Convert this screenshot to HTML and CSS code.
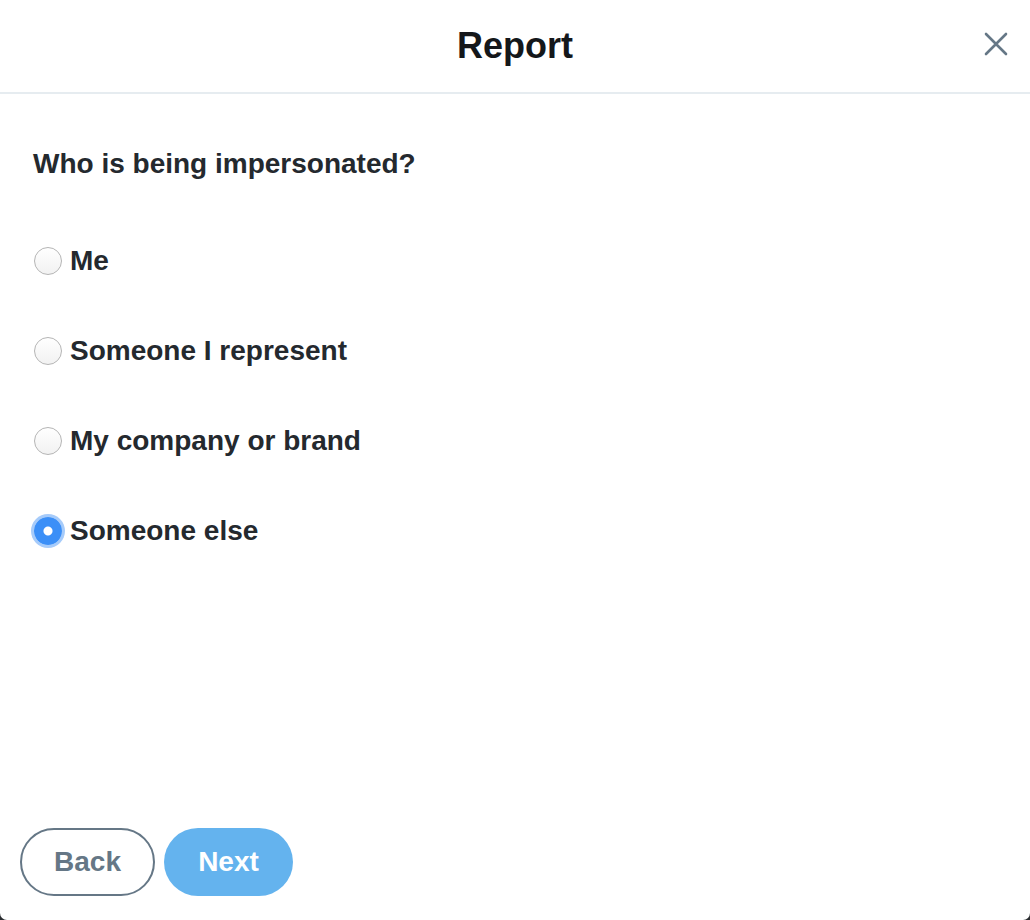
FILE: index.html
```html
<!DOCTYPE html>
<html lang="en">
<head>
    <meta charset="UTF-8">
    <title>Report</title>
    <link rel="stylesheet" href="styles.css">
</head>
<body>
    <div class="modal">
        <!-- Cabecera -->
        <div class="modal-header">
            <h1>Report</h1>
            <button type="button" class="close-btn" aria-label="Close">
                <svg width="24" height="24" viewBox="0 0 24 24">
                    <path d="M2 2 L22 22 M22 2 L2 22" stroke="#657786" stroke-width="2.6" stroke-linecap="round" fill="none"/>
                </svg>
            </button>
        </div>

        <!-- Opciones -->
        <form class="modal-body">
            <h2>Who is being impersonated?</h2>
            <label class="option"><input type="radio" name="who" value="me"> Me</label>
            <label class="option"><input type="radio" name="who" value="represent"> Someone I represent</label>
            <label class="option"><input type="radio" name="who" value="company"> My company or brand</label>
            <label class="option"><input type="radio" name="who" value="else" checked> Someone else</label>
        </form>

        <!-- Botones -->
        <div class="modal-footer">
            <button type="button" class="btn btn-back">Back</button>
            <button type="button" class="btn btn-next">Next</button>
        </div>
    </div>
</body>
</html>
```

FILE: styles.css
```css
html, body {
    margin: 0;
    padding: 0;
    background-color: #2a2d30;
}

body {
    font-family: "Liberation Sans", Arial, sans-serif;
    color: #14171a;
}

.modal {
    height: 920px;
    background-color: #ffffff;
    border-radius: 0 0 7px 7px;
    display: flex;
    flex-direction: column;
}

.modal-header {
    height: 92px;
    border-bottom: 2px solid #e6ecf0;
    display: flex;
    align-items: center;
    justify-content: center;
    position: relative;
}

.modal-header h1 {
    margin: 0;
    font-size: 36px;
    font-weight: bold;
    color: #14171a;
}

.close-btn {
    position: absolute;
    right: 22px;
    top: 32px;
    background: none;
    border: none;
    padding: 0;
    cursor: pointer;
    line-height: 0;
}

.modal-body {
    padding: 54px 34px 0;
    display: flex;
    flex-direction: column;
}

.modal-body h2 {
    margin: 0 0 36px -1px;
    font-size: 28px;
    line-height: 32px;
    font-weight: bold;
    color: #24292e;
}

.option {
    height: 90px;
    display: flex;
    align-items: center;
    gap: 8px;
    font-size: 28px;
    font-weight: bold;
    color: #24292e;
    cursor: pointer;
}

.option input {
    appearance: none;
    -webkit-appearance: none;
    margin: 0;
    width: 28px;
    height: 28px;
    border-radius: 50%;
    border: 1px solid #b5b5b5;
    background: linear-gradient(#ffffff, #f2f2f2);
    box-sizing: border-box;
}

.option input:checked {
    border: none;
    background: radial-gradient(circle, #ffffff 0 4px, #3b8ff7 5px);
    box-shadow: 0 0 0 3px #a6cbfa;
}

.modal-footer {
    margin-top: auto;
    padding: 0 20px 24px;
    display: flex;
    gap: 9px;
}

.btn {
    height: 68px;
    border-radius: 34px;
    font-family: "Liberation Sans", Arial, sans-serif;
    font-size: 28px;
    font-weight: bold;
    cursor: pointer;
    box-sizing: border-box;
}

.btn-back {
    width: 135px;
    background-color: #ffffff;
    border: 2px solid #657786;
    color: #657786;
}

.btn-next {
    width: 129px;
    background-color: #64b3ee;
    border: none;
    color: #ffffff;
}
```
